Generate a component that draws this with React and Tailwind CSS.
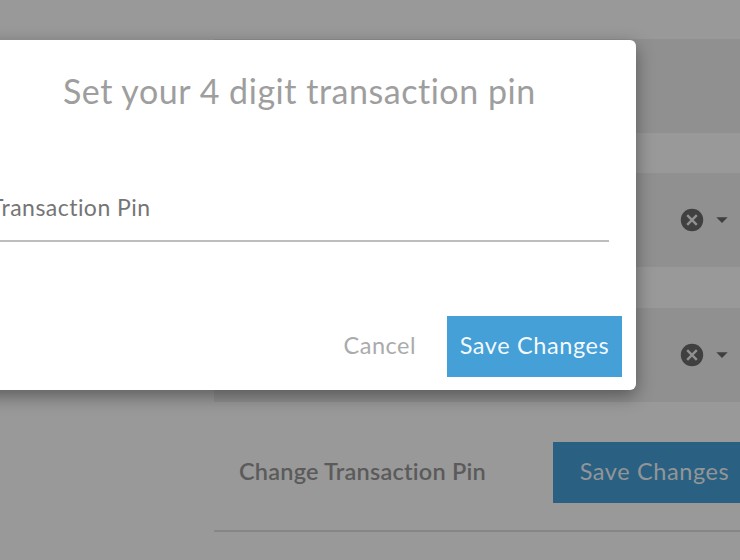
const ClearIcon = () => (
  <svg width="24" height="24" viewBox="0 0 24 24" className="shrink-0">
    <circle cx="12" cy="12" r="11.2" fill="#6b6b6b" />
    <path
      d="M7.2 7.2l9.6 9.6M16.8 7.2l-9.6 9.6"
      stroke="#f0f0f0"
      strokeWidth="2.4"
    />
  </svg>
);

const CaretIcon = () => (
  <svg width="12" height="6" viewBox="0 0 12 6" className="shrink-0">
    <path d="M0.3 0.2h11.4L6 5.9z" fill="#6b6b6b" />
  </svg>
);

const SelectField = ({ clearable = false }) => (
  <div className="flex h-[94px] shrink-0 items-center justify-end gap-3 bg-[#f0f0f0] pr-3">
    {clearable && (
      <>
        <ClearIcon />
        <CaretIcon />
      </>
    )}
  </div>
);

const SettingsForm = () => (
  <div className="ml-[214px] flex flex-col pt-[39px]">
    <div className="flex flex-col gap-[40.4px]">
      <SelectField />
      <SelectField clearable />
      <SelectField clearable />
    </div>

    {/* ── Pin row ───────────────────────────────────────── */}
    <div className="flex h-[130px] items-start justify-between border-b-2 border-[#e0e0e0] pt-[40px]">
      <span className="pl-[25px] pt-[12px] text-[23.5px] leading-[34px] font-semibold tracking-[0.22px] whitespace-nowrap text-[#989898]">
        Change Transaction Pin
      </span>
      <button className="-mr-4 h-[61px] w-[203px] shrink-0 bg-[#46a0d8] pb-[1px] text-[23.5px] tracking-[0.6px] whitespace-nowrap text-white/95">
        Save Changes
      </button>
    </div>
  </div>
);

const PinDialog = () => (
  <div className="flex h-[350px] w-[674px] shrink-0 flex-col rounded-md bg-white shadow-[0_6px_18px_rgba(0,0,0,0.4)]">
    <h2 className="pt-[28px] pl-[101px] text-[34px] leading-[46px] font-normal tracking-[0.53px] whitespace-nowrap text-[#9e9e9e]">
      Set your 4 digit transaction pin
    </h2>

    <div className="mt-[75px] mr-[27px] ml-[28px] h-[53px] border-b-2 border-[#bdbdbd] text-[23px] leading-[36px] tracking-[0.47px] text-[#757575]">
      Transaction Pin
    </div>

    <div className="mt-[74px] flex items-center justify-end gap-[31px] pr-[14px]">
      <button className="pb-[1px] text-[23.5px] tracking-[0.5px] text-[#ababab]">
        Cancel
      </button>
      <button className="h-[61px] w-[175px] bg-[#46a0d8] pb-[1px] text-[23.5px] tracking-[0.6px] whitespace-nowrap text-white/95">
        Save Changes
      </button>
    </div>
  </div>
);

export default function App() {
  return (
    <div className="relative h-[560px] w-[740px] overflow-hidden bg-white font-['Lato',sans-serif]">
      <SettingsForm />

      {/* ── Backdrop + dialog ─────────────────────────────── */}
      <div className="absolute inset-0 flex items-start bg-black/40 pt-[40px]">
        <div className="-ml-[38px] flex">
          <PinDialog />
        </div>
      </div>
    </div>
  );
}
